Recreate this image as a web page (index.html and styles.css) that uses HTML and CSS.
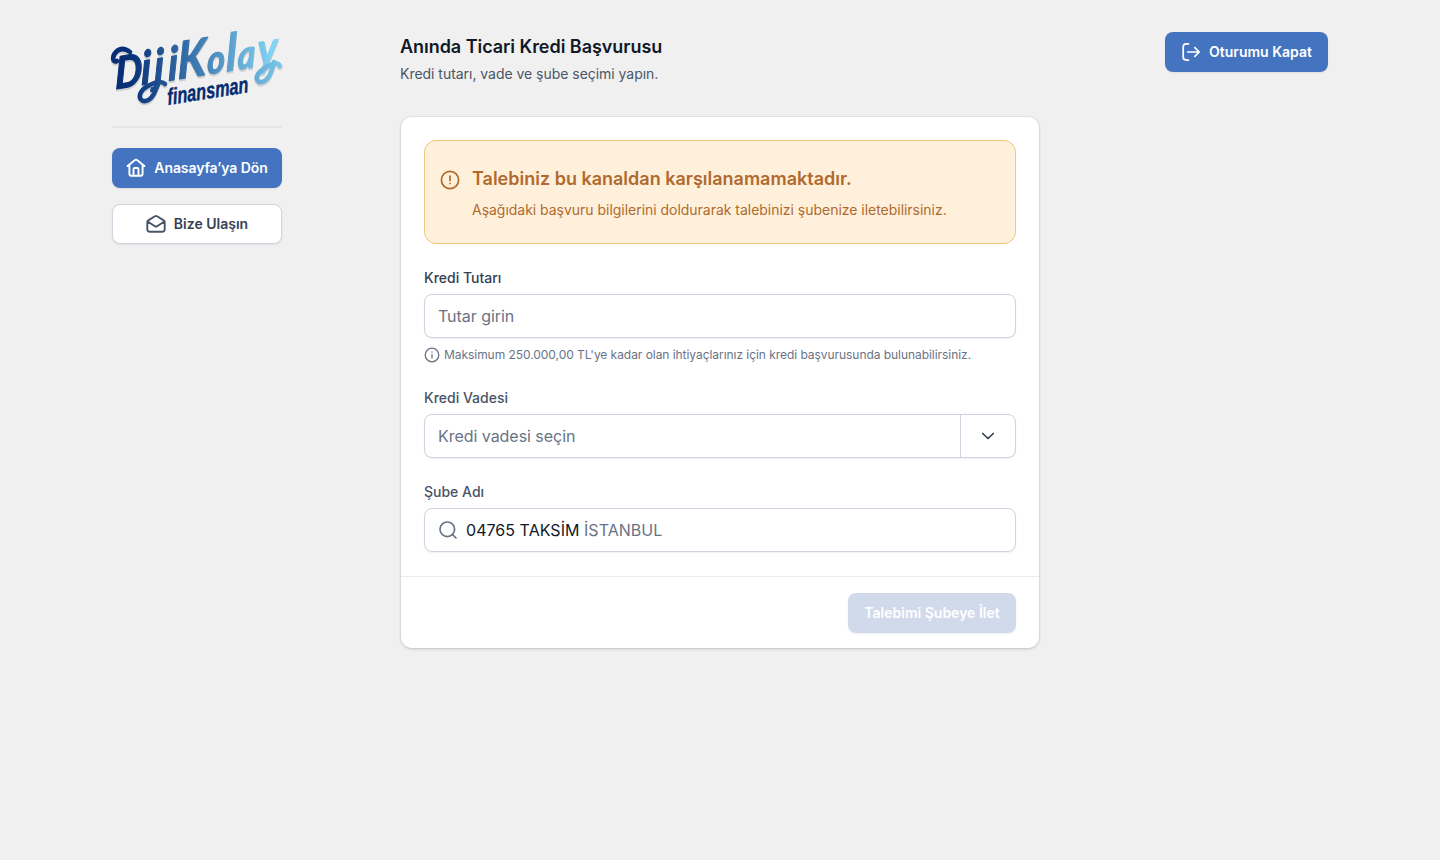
FILE: index.html
```html
<!DOCTYPE html>
<html lang="tr">
<head>
<meta charset="utf-8">
<title>Anında Ticari Kredi Başvurusu</title>
<link rel="stylesheet" href="styles.css">
</head>
<body>
<div class="page">
  <aside class="sidebar">
    <div class="brand">
      <svg class="logo" width="170" height="76" viewBox="0 0 170 76" role="img" aria-label="DijiKolay finansman">
        <defs>
          <linearGradient id="wave" gradientUnits="userSpaceOnUse" x1="0" y1="0" x2="180" y2="0">
            <stop offset="0.08" stop-color="#082f76"/>
            <stop offset="0.45" stop-color="#346ea8"/>
            <stop offset="1" stop-color="#82d2f2"/>
          </linearGradient>
        </defs>
        <g class="logo-word" fill="url(#wave)">
          <text transform="translate(4 57) rotate(-9) skewX(-9) scale(.88 1)" y="0"><tspan class="initial" x="-1">D</tspan><tspan x="29 44 60">iji</tspan><tspan class="tall" x="71">K</tspan><tspan class="small" x="105">o</tspan><tspan class="tall" x="127">l</tspan><tspan class="small" x="140">a</tspan><tspan class="tail" x="163">y</tspan></text>
          <path class="flourish" d="M5 29C0 31 0 24 4 20C9 15 14 17 18 20"/>
          <path class="flourish" d="M46 50C43 63 38 70 31 69C25 66 28 58 36 54C43 50 49 48 53 52"/>
          <path class="flourish" d="M162 30C159 44 154 51 147 50C142 46 146 40 153 36C160 32 165 29 168 34"/>
        </g>
        <text class="logo-sub" transform="translate(56 73) rotate(-9) skewX(-4)" textLength="82" lengthAdjust="spacingAndGlyphs">finansman</text>
      </svg>
    </div>
    <nav class="side-nav">
      <a class="btn btn-primary btn-home">
        <svg class="icon" viewBox="0 0 20 20"><path d="M1.6 8.1 8.7 2.3a2 2 0 0 1 2.6 0l7.1 5.8M3.4 7v8.8c0 1.2.8 2 2 2h9.2c1.2 0 2-.8 2-2V7M7.5 17.5v-6.2c0-.8.5-1.3 1.3-1.3h2.4c.8 0 1.3.5 1.3 1.3v6.2"/></svg>
        <span>Anasayfa’ya Dön</span>
      </a>
      <a class="btn btn-outline">
        <svg class="icon" viewBox="0 0 20 20"><path d="M1.3 8.1c0-.8.3-1.3 1-1.7L8.9 2.3a2 2 0 0 1 2.2 0l6.6 4.1c.7.4 1 .9 1 1.7v7.2c0 1.6-.9 2.5-2.5 2.5H3.8c-1.6 0-2.5-.9-2.5-2.5ZM1.6 7.5l7.3 4.7c.8.5 1.4.5 2.2 0l7.3-4.7"/></svg>
        <span>Bize Ulaşın</span>
      </a>
    </nav>
  </aside>

  <main class="content">
    <header class="heading">
      <h1>Anında Ticari Kredi Başvurusu</h1>
      <p>Kredi tutarı, vade ve şube seçimi yapın.</p>
    </header>
    <form class="card">
      <div class="card-body">
        <div class="alert">
          <svg class="icon" viewBox="0 0 20 20"><circle cx="10" cy="10" r="8.6"/><path d="M10 6v4.4M10 13.4v.1"/></svg>
          <div>
            <h2>Talebiniz bu kanaldan karşılanamamaktadır.</h2>
            <p>Aşağıdaki başvuru bilgilerini doldurarak talebinizi şubenize iletebilirsiniz.</p>
          </div>
        </div>

        <div class="field field-amount">
          <span class="label">Kredi Tutarı</span>
          <div class="control"><span class="placeholder">Tutar girin</span></div>
          <div class="hint">
            <svg class="hint-icon" viewBox="0 0 16 16"><circle cx="8" cy="8" r="6.8"/><path d="M8 7.5v3.4M8 5v.1"/></svg>
            <span>Maksimum 250.000,00 TL'ye kadar olan ihtiyaçlarınız için kredi başvurusunda bulunabilirsiniz.</span>
          </div>
        </div>

        <div class="field">
          <span class="label label-soft">Kredi Vadesi</span>
          <div class="control control-select">
            <span class="placeholder">Kredi vadesi seçin</span>
            <span class="toggle"><svg class="icon" viewBox="0 0 20 20"><path d="m4.7 7.5 5.3 5 5.3-5"/></svg></span>
          </div>
        </div>

        <div class="field">
          <span class="label label-soft">Şube Adı</span>
          <div class="control control-search">
            <svg class="icon" viewBox="0 0 20 20"><circle cx="9.3" cy="9.3" r="7.3"/><path d="m14.6 14.6 3.4 3.4"/></svg>
            <span class="branch">04765 TAKSİM <span class="city">İSTANBUL</span></span>
          </div>
        </div>
      </div>
      <footer class="card-footer">
        <span class="btn btn-disabled">Talebimi Şubeye İlet</span>
      </footer>
    </form>
  </main>

  <div class="account">
    <a class="btn btn-primary btn-logout">
      <svg class="icon" viewBox="0 0 20 20"><path d="M7.5 1.9H5.2c-2 0-3 1-3 3v10.2c0 2 1 3 3 3h2.3M6.8 10h11.4M13.8 5.6l4.4 4.4-4.4 4.4"/></svg>
      <span>Oturumu Kapat</span>
    </a>
  </div>
</div>
</body>
</html>
```

FILE: styles.css
```css
* { box-sizing: border-box; }
body {
  margin: 0;
  min-height: 860px;
  background: #f0f0f0;
  color: #111827;
  font-family: Inter, "Liberation Sans", sans-serif;
  font-size: 14px;
  line-height: 20px;
}
h1, h2, p { margin: 0; }
.page {
  display: grid;
  grid-template-columns: 170px 640px 170px;
  justify-content: space-between;
  align-items: start;
  width: 1216px;
  margin: 0 auto;
  padding-top: 32px;
}
.brand {
  height: 96px;
  border-bottom: 2px solid #e4e5e7;
}
.logo { display: block; overflow: visible; }
.logo-word {
  font-family: Lato, sans-serif;
  font-size: 46px;
  font-weight: 700;
  font-style: italic;
  filter: drop-shadow(0 2px 0 #cfcfd1);
}
.logo-word text {
  stroke: url(#wave);
  stroke-width: 1.2;
  stroke-linejoin: round;
}
.logo-word .initial { font-size: 44px; }
.logo-word .tall { font-size: 51px; }
.logo-word .small { font-size: 39px; }
.logo-word .tail { font-size: 46px; }
.flourish {
  fill: none;
  stroke: url(#wave);
  stroke-width: 4.6;
  stroke-linecap: round;
}
.logo-sub {
  font-family: "Liberation Sans Narrow", "Liberation Sans", sans-serif;
  font-size: 23px;
  font-weight: 700;
  font-style: italic;
  fill: #062b70;
  stroke: #062b70;
  stroke-width: .4;
}
.side-nav {
  display: grid;
  gap: 16px;
  padding-top: 20px;
}
.icon {
  flex: none;
  width: 20px;
  height: 20px;
  fill: none;
  stroke: currentColor;
  stroke-width: 1.7;
  stroke-linecap: round;
  stroke-linejoin: round;
}
.btn {
  display: flex;
  align-items: center;
  justify-content: center;
  gap: 8px;
  height: 40px;
  border-radius: 8px;
  font-weight: 600;
  white-space: nowrap;
  box-shadow: 0 1px 2px rgba(16, 24, 40, .08);
}
.btn-primary { background: #4474c0; color: #fff; }
.side-nav .icon { stroke-width: 1.9; }
.btn-home { letter-spacing: -.1px; }
.btn-outline {
  background: #fff;
  border: 1px solid #d1d5e0;
  color: #374151;
}
.btn-outline .icon { color: #475467; }
.account { display: flex; justify-content: flex-end; }
.btn-logout { width: 163px; }
.heading { height: 85px; padding-top: 1px; }
.heading h1 {
  font-size: 18px;
  line-height: 28px;
  font-weight: 600;
  letter-spacing: -.04px;
}
.heading p {
  margin-top: 3px;
  color: #4b5568;
  letter-spacing: -.03px;
}
.card {
  margin: 0 1px;
  border-radius: 11px;
  background: #fff;
  box-shadow: 0 0 0 1px rgba(16, 24, 40, .04), 0 1px 3px rgba(16, 24, 40, .18);
}
.card-body {
  display: grid;
  gap: 24px;
  padding: 23px 23px 24px;
}
.alert {
  display: flex;
  gap: 12px;
  height: 104px;
  padding: 24px 15px;
  border: 1px solid #eacb80;
  border-radius: 12px;
  background: #fff0dc;
  color: #b06a2c;
}
.alert .icon { margin-top: 5px; }
.alert h2 {
  font-size: 18px;
  line-height: 28px;
  font-weight: 600;
}
.alert p { margin-top: 7px; letter-spacing: -.025px; }
.label {
  display: block;
  margin-bottom: 6px;
  font-weight: 500;
  color: #344054;
}
.label-soft { color: #475467; }
.control {
  display: flex;
  align-items: center;
  height: 44px;
  padding-left: 13px;
  border: 1px solid #d0d2e0;
  border-radius: 8px;
  background: #fff;
  font-size: 16px;
  line-height: 24px;
  box-shadow: 0 1px 2px rgba(16, 24, 40, .06);
}
.placeholder, .city { color: #697386; }
.placeholder { letter-spacing: -.04px; }
.branch { letter-spacing: .04px; }
.hint {
  display: flex;
  align-items: center;
  gap: 4px;
  height: 18px;
  margin-top: 8px;
  color: #697386;
  font-size: 12px;
  line-height: 18px;
  letter-spacing: -.05px;
  white-space: nowrap;
}
.hint-icon {
  width: 16px;
  height: 16px;
  fill: none;
  stroke: currentColor;
  stroke-width: 1.3;
  stroke-linecap: round;
}
.control-select { justify-content: space-between; }
.toggle {
  display: grid;
  place-items: center;
  width: 55px;
  height: 42px;
  border-left: 1px solid #d0d2e0;
  color: #344054;
}
.control-search { gap: 8px; }
.control-search .icon { color: #697386; }
.card-footer {
  display: flex;
  justify-content: flex-end;
  padding: 16px 23px 15px;
  border-top: 1px solid #eaebf1;
}
.btn-disabled {
  width: 168px;
  background: #d1daeb;
  color: #fff;
}
```
